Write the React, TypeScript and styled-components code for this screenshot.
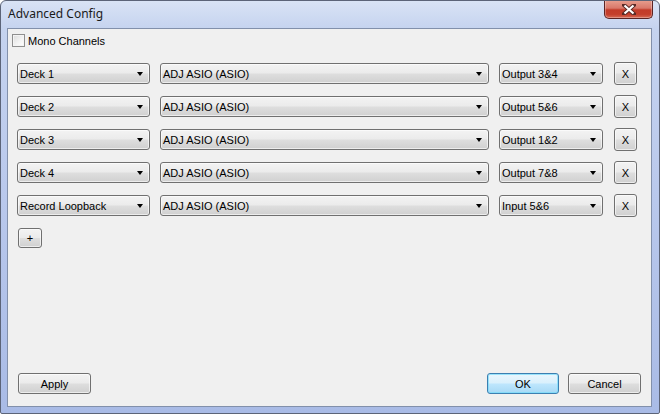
import * as React from 'react';
import styled, { createGlobalStyle } from 'styled-components';

const GlobalStyle = createGlobalStyle`
  html, body {
    margin: 0;
    padding: 0;
    background: #ffffff;
  }
  * {
    box-sizing: border-box;
  }
`;

const Window = styled.div`
  width: 660px;
  height: 414px;
  display: flex;
  flex-direction: column;
  border: 1px solid #5c6478;
  border-radius: 6px 6px 2px 2px;
  background: linear-gradient(180deg, #d9e3f5 0px, #c5d3ef 28px, #b9c8ec 200px, #a9bbe6 100%);
  font-family: 'Liberation Sans', Arial, sans-serif;
  font-size: 11px;
  color: #000000;
  overflow: hidden;
`;

const TitleBar = styled.div`
  height: 27px;
  display: flex;
  align-items: flex-start;
  padding-left: 7px;
  flex-shrink: 0;
`;

const Title = styled.div`
  font-family: 'Noto Sans', 'Liberation Sans', sans-serif;
  font-size: 12px;
  line-height: 14px;
  padding-top: 6px;
  color: #1a1a1a;
`;

const CloseButton = styled.div`
  margin-left: auto;
  margin-right: 6px;
  margin-top: -1px;
  width: 49px;
  height: 19px;
  border: 1px solid #5b2424;
  border-top: none;
  border-radius: 0 0 5px 5px;
  background: linear-gradient(180deg, #e8a090 0%, #d9786a 45%, #c23b29 55%, #c43f2c 80%, #d66a55 100%);
  box-shadow: inset 0 0 0 1px rgba(255, 255, 255, 0.3);
  display: flex;
  align-items: center;
  justify-content: center;
`;

const Client = styled.div`
  flex: 1;
  margin: 0 7px 6px 6px;
  border: 1px solid #8290ab;
  background: #f0f0f0;
  display: flex;
  flex-direction: column;
  padding: 5px 10px 12px 4px;
`;

const CheckRow = styled.label`
  display: flex;
  align-items: center;
  gap: 3px;
  height: 13px;
`;

const CheckBox = styled.span`
  width: 13px;
  height: 13px;
  border: 1px solid #8f8f8f;
  background: linear-gradient(135deg, #dcdcdc 0%, #f4f4f4 60%, #ffffff 100%);
  box-shadow: inset 0 0 0 1px #f4f4f4;
`;

const Rows = styled.div`
  display: flex;
  flex-direction: column;
  gap: 10px;
  margin-top: 15px;
  padding-left: 5px;
`;

const Row = styled.div`
  display: grid;
  grid-template-columns: 133px 329px 104px 23px;
  column-gap: 10px;
  align-items: center;
  height: 23px;
`;

const Combo = styled.div`
  position: relative;
  height: 21px;
  border: 1px solid #707070;
  border-radius: 3px;
  background: linear-gradient(180deg, #f3f3f3 0%, #ebebeb 48%, #dedede 52%, #d0d0d0 100%);
  box-shadow: inset 0 0 0 1px rgba(255, 255, 255, 0.6);
  display: flex;
  align-items: center;
  padding-left: 2px;
  white-space: nowrap;
`;

const Arrow = styled.span`
  position: absolute;
  right: 6px;
  top: 8px;
  width: 0;
  height: 0;
  border-left: 3.5px solid transparent;
  border-right: 3.5px solid transparent;
  border-top: 4px solid #000000;
`;

const Button = styled.button<{ $w: number; $h?: number; $primary?: boolean }>`
  width: ${p => p.$w}px;
  height: ${p => p.$h ?? 21}px;
  padding: 0;
  border: 1px solid ${p => (p.$primary ? '#3c7fb1' : '#707070')};
  border-radius: 3px;
  background: ${p =>
    p.$primary
      ? 'linear-gradient(180deg, #eaf6fd 0%, #d9f0fc 48%, #bee6fd 52%, #a7d9f5 100%)'
      : 'linear-gradient(180deg, #f3f3f3 0%, #ebebeb 48%, #dedede 52%, #d0d0d0 100%)'};
  box-shadow: inset 0 0 0 1px ${p => (p.$primary ? 'rgba(120, 220, 250, 0.7)' : 'rgba(255, 255, 255, 0.6)')};
  font-family: inherit;
  font-size: 11px;
  color: #000000;
  display: flex;
  align-items: center;
  justify-content: center;
`;

const RemoveButton = styled(Button)`
  margin-left: 1px;
`;

const AddButton = styled(Button)`
  margin: 11px 0 0 6px;
`;

const Footer = styled.div`
  margin-top: auto;
  display: flex;
  align-items: center;
  padding-left: 6px;
  gap: 9px;
`;

const Spacer = styled.div`
  flex: 1;
`;

const rows = [
  { source: 'Deck 1', out: 'Output 3&4' },
  { source: 'Deck 2', out: 'Output 5&6' },
  { source: 'Deck 3', out: 'Output 1&2' },
  { source: 'Deck 4', out: 'Output 7&8' },
  { source: 'Record Loopback', out: 'Input 5&6' },
];

function CloseGlyph() {
  return (
    <svg width="14" height="11" viewBox="0 0 14 11">
      <path d="M2 1 L12 10 M12 1 L2 10" stroke="#5a2a26" strokeWidth="4" strokeLinecap="square" />
      <path d="M2.5 1.5 L11.5 9.5 M11.5 1.5 L2.5 9.5" stroke="#ffffff" strokeWidth="2.2" />
    </svg>
  );
}

export default function App() {
  return (
    <>
      <GlobalStyle />
      <Window>
        <TitleBar>
          <Title>Advanced Config</Title>
          <CloseButton>
            <CloseGlyph />
          </CloseButton>
        </TitleBar>
        <Client>
          <CheckRow>
            <CheckBox />
            Mono Channels
          </CheckRow>
          <Rows>
            {rows.map(r => (
              <Row key={r.source}>
                <Combo>
                  {r.source}
                  <Arrow />
                </Combo>
                <Combo>
                  ADJ ASIO (ASIO)
                  <Arrow />
                </Combo>
                <Combo>
                  {r.out}
                  <Arrow />
                </Combo>
                <RemoveButton $w={23} $h={23}>X</RemoveButton>
              </Row>
            ))}
          </Rows>
          <div>
            <AddButton $w={24} $h={20}>+</AddButton>
          </div>
          <Footer>
            <Button $w={73}>Apply</Button>
            <Spacer />
            <Button $w={72} $primary>OK</Button>
            <Button $w={73}>Cancel</Button>
          </Footer>
        </Client>
      </Window>
    </>
  );
}
